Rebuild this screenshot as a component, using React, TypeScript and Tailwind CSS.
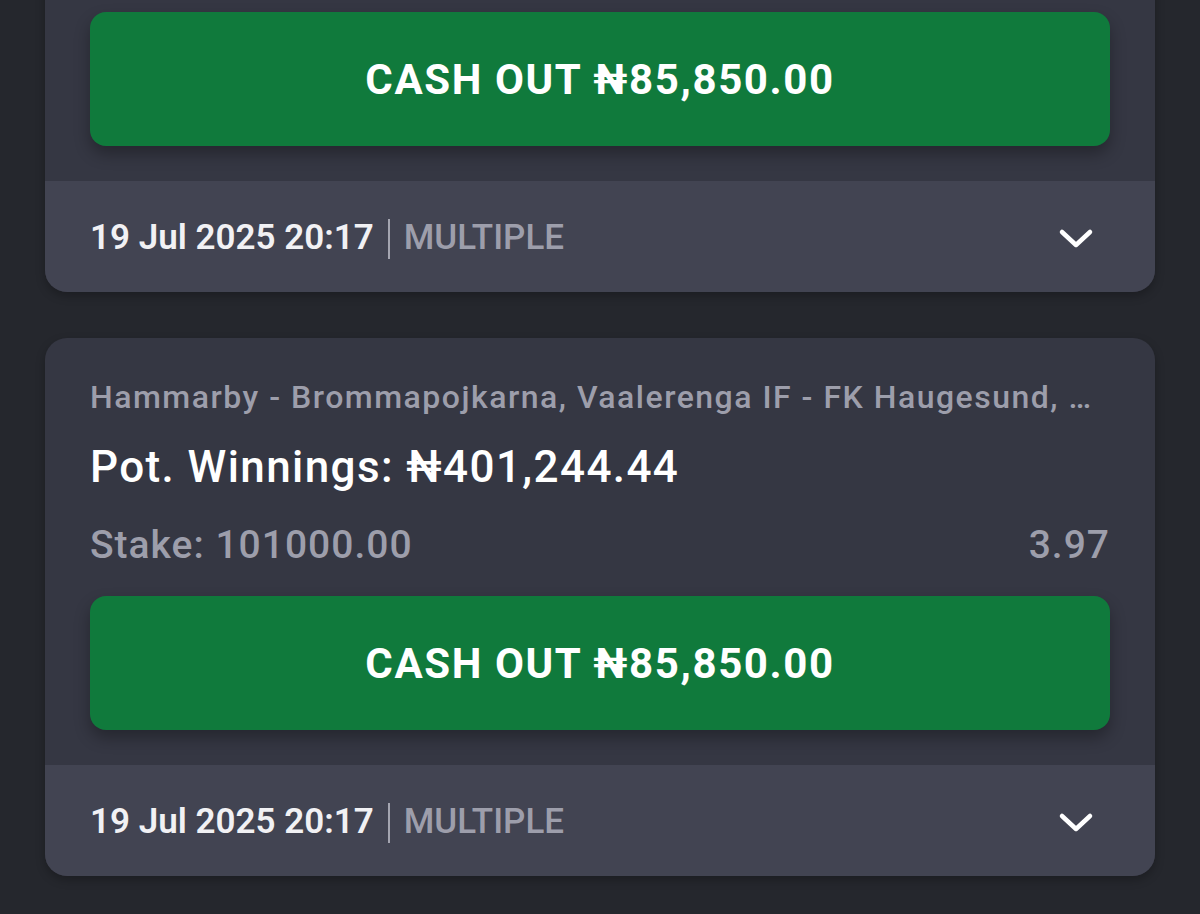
import React from 'react'

interface Bet {
  id: number
  events: string
  potWinnings: string
  stake: string
  odds: string
  cashOut: string
  placedAt: string
  kind: string
}

const bets: Bet[] = [
  {
    id: 1,
    events: 'Hammarby - Brommapojkarna, Vaalerenga IF - FK Haugesund, Molde FK - Rosenborg BK',
    potWinnings: '₦401,244.44',
    stake: '101000.00',
    odds: '3.97',
    cashOut: '₦85,850.00',
    placedAt: '19 Jul 2025 20:17',
    kind: 'MULTIPLE',
  },
  {
    id: 2,
    events: 'Hammarby - Brommapojkarna, Vaalerenga IF - FK Haugesund, Molde FK - Rosenborg BK',
    potWinnings: '₦401,244.44',
    stake: '101000.00',
    odds: '3.97',
    cashOut: '₦85,850.00',
    placedAt: '19 Jul 2025 20:17',
    kind: 'MULTIPLE',
  },
]

function Chevron() {
  return (
    <svg width="36" height="24" viewBox="0 0 36 24" fill="none">
      <path d="M4 5 L18 18 L32 5" stroke="#ffffff" strokeWidth="4.5" strokeLinecap="round" strokeLinejoin="round" />
    </svg>
  )
}

function BetCard({ bet }: { bet: Bet }) {
  return (
    <div className="rounded-[22px] bg-[#353743] overflow-hidden shadow-[0_4px_10px_rgba(0,0,0,0.25)]">
      {/* body */}
      <div className="px-[45px] pt-[40px] pb-[35px]">
        <div className="text-[32px] leading-[38px] tracking-[1.5px] text-[#9d9eab] font-medium truncate">
          {bet.events}
        </div>
        <div className="mt-[25px] text-[44px] leading-[52px] tracking-[1.4px] text-white font-medium">
          Pot. Winnings: {bet.potWinnings}
        </div>
        <div className="mt-[30px] flex justify-between text-[39px] leading-[44px] tracking-[1px] text-[#9d9eab] font-medium">
          <span>Stake: {bet.stake}</span>
          <span>{bet.odds}</span>
        </div>
        <button className="mt-[29px] w-full h-[134px] rounded-[16px] bg-[#107a3c] text-white text-[42px] tracking-[1.6px] font-bold shadow-[0_8px_16px_rgba(0,0,0,0.3)]">
          CASH OUT {bet.cashOut}
        </button>
      </div>

      {/* footer */}
      <div className="h-[111px] bg-[#424452] px-[45px] pt-[4px] flex items-center justify-between">
        <div className="flex items-center text-[35px] font-semibold">
          <span className="text-[#f1f1f4]">{bet.placedAt}</span>
          <span className="mx-[14px] w-[2px] h-[40px] bg-[#a4a5b0]"></span>
          <span className="text-[#9d9eab] font-medium">{bet.kind}</span>
        </div>
        <div className="mr-[16px]">
          <Chevron />
        </div>
      </div>
    </div>
  )
}

export default function App() {
  return (
    <div
      className="w-[1200px] h-[914px] overflow-hidden bg-[#25272d]"
      style={{ fontFamily: 'Roboto, "Noto Sans", sans-serif' }}
    >
      <div className="-mt-[246px] px-[45px] flex flex-col gap-[46px]">
        {bets.map(bet => (
          <BetCard key={bet.id} bet={bet} />
        ))}
      </div>
    </div>
  )
}
